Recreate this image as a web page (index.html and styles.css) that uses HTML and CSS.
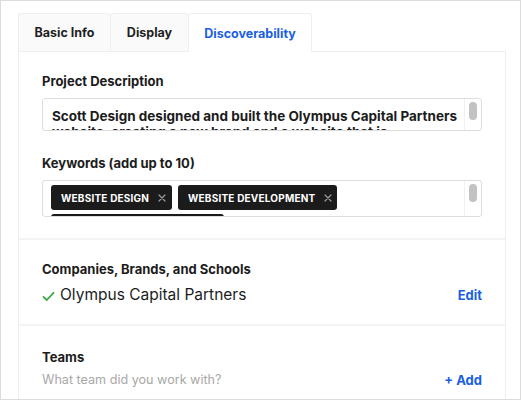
FILE: index.html
```html
<!DOCTYPE html>
<html>
<head>
<meta charset="utf-8">
<link rel="stylesheet" href="styles.css">
</head>
<body>
<div class="frame">
  <div class="tabs">
    <div class="tab tab-basic">Basic Info</div>
    <div class="tab tab-display">Display</div>
    <div class="tab tab-disc active">Discoverability</div>
  </div>
  <div class="panel">
    <section class="section first">
      <div class="label">Project Description</div>
      <div class="field desc">
        <div class="desc-text">Scott Design designed and built the Olympus Capital Partners website, creating a new brand and a website that is representative of the firm and its history.</div>
        <div class="sbar"><div class="thumb"></div></div>
      </div>
      <div class="label kw-label">Keywords (add up to 10)</div>
      <div class="field kw">
        <div class="tags">
          <span class="tag tag1">WEBSITE DESIGN <svg class="x" width="8" height="8" viewBox="0 0 8 8"><path d="M1 1 L7 7 M7 1 L1 7" stroke="#9c9c9c" stroke-width="1.2" stroke-linecap="round"/></svg></span>
          <span class="tag tag2">WEBSITE DEVELOPMENT <svg class="x" width="8" height="8" viewBox="0 0 8 8"><path d="M1 1 L7 7 M7 1 L1 7" stroke="#9c9c9c" stroke-width="1.2" stroke-linecap="round"/></svg></span>
          <span class="tag tag3">FINANCIAL SERVICES <svg class="x" width="8" height="8" viewBox="0 0 8 8"><path d="M1 1 L7 7 M7 1 L1 7" stroke="#9c9c9c" stroke-width="1.2" stroke-linecap="round"/></svg></span>
        </div>
        <div class="sbar"><div class="thumb"></div></div>
      </div>
    </section>
    <section class="section companies">
      <div class="label">Companies, Brands, and Schools</div>
      <div class="row">
        <div class="company">
          <svg class="check" width="13" height="11" viewBox="0 0 13 11"><path d="M1.5 5.8 L4.8 9 L11.5 1.8" fill="none" stroke="#3fa64a" stroke-width="1.8" stroke-linecap="round" stroke-linejoin="round"/></svg>
          <span>Olympus Capital Partners</span>
        </div>
        <a class="link">Edit</a>
      </div>
    </section>
    <section class="section teams">
      <div class="label">Teams</div>
      <div class="row">
        <div class="placeholder">What team did you work with?</div>
        <a class="link">+ Add</a>
      </div>
    </section>
  </div>
</div>
</body>
</html>
```

FILE: styles.css
```css
* { box-sizing: border-box; }
html, body { margin: 0; padding: 0; background: #fff; }
body { font-family: Inter, "Noto Sans", sans-serif; color: #1c1c1c; }

.frame {
  width: 521px;
  height: 400px;
  border: 1px solid #dcdcdc;
  padding: 12px 0 0 17px;
  overflow: hidden;
}

.tabs { display: flex; height: 38px; }
.tab {
  display: flex;
  align-items: center;
  justify-content: center;
  font-size: 12.5px;
  font-weight: 700;
  color: #1f1f1f;
  background: #fafafa;
  border: 1px solid #eeeeee;
  border-bottom: none;
  border-right: none;
  border-radius: 3px 3px 0 0;
}
.tab-basic { width: 92px; }
.tab-display { width: 78px; }
.tab-disc { width: 124px; border-right: 1px solid #eeeeee; }
.tab.active { background: #fff; color: #1a5fe0; margin-bottom: -1px; height: 39px; position: relative; }

.panel {
  width: 488px;
  border: 1px solid #eeeeee;
  border-bottom: none;
  background: #fff;
}

.section { padding: 0 23px; border-bottom: 2px solid #f3f3f3; }
.section.first { padding-top: 21px; padding-bottom: 21px; }

.label { font-size: 13px; font-weight: 700; color: #1c1c1c; line-height: 16px; }

.field {
  position: relative;
  border: 1px solid #dddddd;
  border-radius: 3px;
  overflow: hidden;
  display: flex;
}
.desc { margin-top: 9px; height: 33px; }
.desc-text {
  flex: 1;
  padding: 9px 2px 0 9px;
  font-size: 13.5px;
  font-weight: 700;
  line-height: 16px;
  color: #1c1c1c;
}
.sbar {
  width: 17px;
  flex: none;
  border-left: 1px solid #f0f0f0;
  padding: 3px 0 0 4px;
}
.thumb { width: 8px; height: 18px; background: #c2c2c2; border-radius: 4px; }

.kw-label { margin-top: 24px; }
.kw { margin-top: 9px; height: 37px; }
.tags {
  flex: 1;
  display: flex;
  flex-wrap: wrap;
  gap: 4px 6px;
  padding: 4px 0 0 8px;
  align-content: flex-start;
}
.tag {
  display: inline-flex;
  align-items: center;
  height: 25px;
  padding: 0 10px;
  background: #1b1b1b;
  color: #fff;
  font-size: 10px;
  font-weight: 700;
  letter-spacing: 0.2px;
  border-radius: 3px;
  white-space: nowrap;
}
.tag1 { width: 121px; }
.tag2 { width: 159px; }
.tag3 { width: 173px; }
.x { margin-left: 9px; flex: none; }

.companies { padding-top: 21px; padding-bottom: 18px; }
.teams { padding-top: 23px; padding-bottom: 20px; border-bottom: none; }

.row { display: flex; justify-content: space-between; align-items: center; }
.companies .row { margin-top: 7px; }
.company { display: flex; align-items: center; gap: 5px; font-size: 15.5px; color: #1c1c1c; line-height: 22px; }
.check { margin-top: 2px; }
.link { color: #1a5fe0; font-size: 13px; font-weight: 700; }
.teams .row { margin-top: 6px; }
.placeholder { font-size: 12.6px; color: #a8a8a8; line-height: 18px; }
```
